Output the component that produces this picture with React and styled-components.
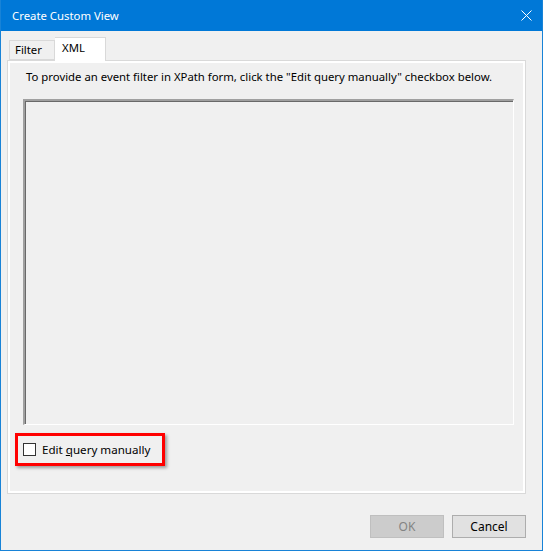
import React, { useState } from 'react';
import styled, { createGlobalStyle } from 'styled-components';

const GlobalStyle = createGlobalStyle`
    html, body {
        margin: 0;
        padding: 0;
        background: #f0f0f0;
    }
    * {
        box-sizing: border-box;
    }
`;

const Window = styled.div`
    width: 543px;
    height: 551px;
    border: 1px solid #1883d7;
    border-top: none;
    background: #f0f0f0;
    display: flex;
    flex-direction: column;
    font-family: "Noto Sans", "Open Sans", sans-serif;
    font-size: 11.35px;
    color: #000;
`;

const TitleBar = styled.div`
    height: 31px;
    flex: none;
    background: #0078d7;
    color: #fff;
    display: flex;
    align-items: center;
    justify-content: space-between;
    padding: 0 10px 0 11px;
`;

const CloseIcon = () => (
    <svg width="11" height="11" viewBox="0 0 11 11">
        <path d="M0.5 0.5 L10.5 10.5 M10.5 0.5 L0.5 10.5" stroke="#fff" strokeWidth="1" fill="none" />
    </svg>
);

const Body = styled.div`
    flex: 1;
    display: flex;
    flex-direction: column;
    padding: 6px 16px 12px 6px;
`;

const TabStrip = styled.div`
    display: flex;
    align-items: flex-end;
    padding-left: 2px;
    height: 23px;
    position: relative;
    z-index: 1;
`;

const Tab = styled.div`
    height: ${p => (p.$active ? '24px' : '20px')};
    margin-bottom: ${p => (p.$active ? '-1px' : '0')};
    padding: ${p => (p.$active ? '2px 0 0 7px' : '1px 0 0 5px')};
    width: ${p => (p.$active ? '51px' : '46px')};
    background: ${p => (p.$active ? '#fff' : '#f0f0f0')};
    border: 1px solid #d9d9d9;
    border-bottom: ${p => (p.$active ? 'none' : '1px solid #d9d9d9')};
    border-left: ${p => (p.$active ? 'none' : '1px solid #d9d9d9')};
    line-height: 16px;
`;

const Panel = styled.div`
    width: 519px;
    height: 434px;
    border: 1px solid #d9d9d9;
    box-shadow: inset 0 0 0 2px #fff;
    padding: 8px 10px 0 15px;
    display: flex;
    flex-direction: column;
`;

const Hint = styled.div`
    line-height: 16px;
    padding-left: 3px;
    white-space: nowrap;
`;

const QueryBox = styled.div`
    margin-top: 14px;
    width: 491px;
    height: 326px;
    background: #f0f0f0;
    border-top: 2px solid #a0a0a0;
    border-left: 2px solid #a0a0a0;
    border-right: 1px solid #fff;
    border-bottom: 1px solid #fff;
    box-shadow: inset 1px 1px 0 #696969;
`;

const Highlight = styled.label`
    margin: 8px 0 0 -8px;
    width: 150px;
    height: 33px;
    border: 3px solid #ff0000;
    box-shadow: 2px 2px 3px rgba(0, 0, 0, 0.35);
    display: flex;
    align-items: center;
    gap: 6px;
    padding-left: 5px;
    font-size: 11.6px;
    cursor: default;
`;

const Box = styled.span`
    width: 13px;
    height: 13px;
    border: 1px solid #333;
    background: #fff;
    display: inline-flex;
    align-items: center;
    justify-content: center;
    font-size: 10px;
`;

const Footer = styled.div`
    margin-top: auto;
    display: flex;
    justify-content: flex-end;
    gap: 8px;
`;

const Button = styled.button`
    width: 74px;
    height: 23px;
    font-family: inherit;
    font-size: 12px;
    padding: 0;
    background: ${p => (p.disabled ? '#cccccc' : '#e1e1e1')};
    border: 1px solid ${p => (p.disabled ? '#bfbfbf' : '#adadad')};
    color: ${p => (p.disabled ? '#838383' : '#000')};
`;

const App = () => {
    const [manual, setManual] = useState(false);

    return (
        <>
            <GlobalStyle />
            <Window>
                <TitleBar>
                    <span>Create Custom View</span>
                    <CloseIcon />
                </TitleBar>
                <Body>
                    <TabStrip>
                        <Tab>Filter</Tab>
                        <Tab $active>XML</Tab>
                    </TabStrip>
                    <Panel>
                        <Hint>To provide an event filter in XPath form, click the "Edit query manually" checkbox below.</Hint>
                        <QueryBox />
                        <Highlight onClick={() => setManual(!manual)}>
                            <Box>{manual ? '✓' : ''}</Box>
                            <span>Edit <u>q</u>uery manually</span>
                        </Highlight>
                    </Panel>
                    <Footer>
                        <Button disabled>OK</Button>
                        <Button>Cancel</Button>
                    </Footer>
                </Body>
            </Window>
        </>
    );
};

export default App;
